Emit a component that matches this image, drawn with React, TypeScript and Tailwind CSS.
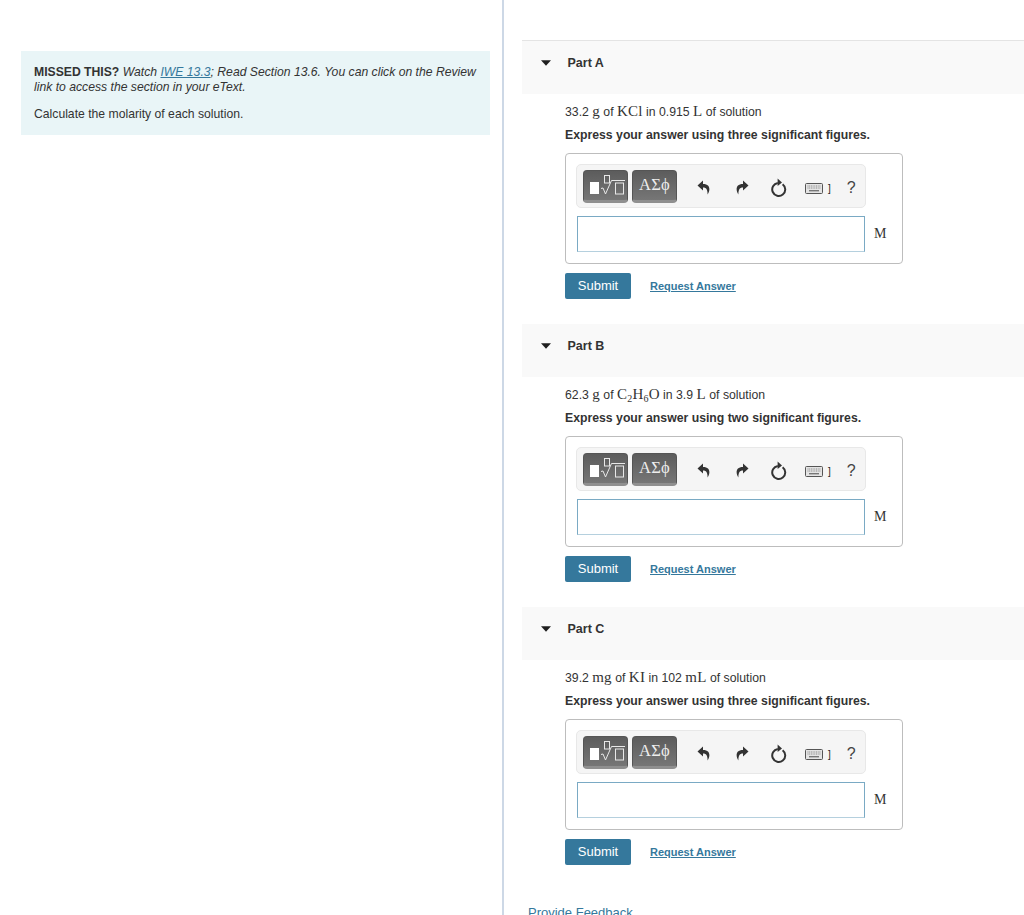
import React from 'react';

const sans = 'font-["Liberation_Sans",Arial,sans-serif]';
const serif = 'font-["Liberation_Serif","Times_New_Roman",serif]';

const M: React.FC<{ children: React.ReactNode }> = ({ children }) => (
    <span className={`${serif} text-[15px] tracking-[0.2px]`}>{children}</span>
);

const Caret = () => (
    <svg width="10" height="6" viewBox="0 0 10 6" className="block">
        <path d="M0 0.3 H10 L5 5.7 Z" fill="#1f1f1f" />
    </svg>
);

const TemplateIcon = () => (
    <svg width="36" height="20" viewBox="0 0 36 20" className="block ml-[4px]">
        <rect x="0" y="7" width="9" height="12" fill="#fff" />
        <rect x="14.5" y="0.5" width="5" height="7.5" fill="none" stroke="#e8e8e8" strokeWidth="1" />
        <path d="M11 13.5 L13 13 L15.5 19 L21.5 5.5 H35" fill="none" stroke="#e8e8e8" strokeWidth="1" />
        <rect x="25.5" y="8" width="8" height="11" fill="none" stroke="#e8e8e8" strokeWidth="1" />
    </svg>
);

const UndoIcon = ({ flip }: { flip?: boolean }) => (
    <svg width="14" height="15" viewBox="0 0 14 15" className={flip ? 'block -scale-x-100' : 'block'}>
        <path d="M6 0.5 L0.5 5.5 L6 10.5 V7.6 C9 7.5 10.6 9.4 10.6 14.5 C13 11 14.2 3.9 6 3.9 Z" fill="#333" />
    </svg>
);

const ResetIcon = () => (
    <svg width="16" height="20" viewBox="0 0 16 20" className="block">
        <path d="M11.6 6.2 A6.5 6.5 0 1 1 6.8 5" fill="none" stroke="#333" strokeWidth="2" />
        <path d="M6.6 0.5 L11 4.6 L6.6 8 Z" fill="#333" />
    </svg>
);

const KeyboardIcon = () => (
    <svg width="18" height="11" viewBox="0 0 18 11" className="block">
        <rect x="0.5" y="0.5" width="17" height="10" rx="1" fill="#e4e4e4" stroke="#555" />
        <path d="M2.5 3 H15.5 M2.5 5 H15.5" stroke="#888" strokeWidth="1" strokeDasharray="1 0.7" />
        <path d="M4 7.7 H14" stroke="#777" strokeWidth="1.4" />
    </svg>
);

const ToolButton: React.FC<{ children: React.ReactNode }> = ({ children }) => (
    <div className="h-[33px] w-[45px] rounded-[4px] border border-[#555] bg-[linear-gradient(#5c5c5c,#767676)] border-b-[3px] border-b-[#8f8f8f] flex items-center justify-center overflow-hidden">
        {children}
    </div>
);

const AnswerBox = () => (
    <div className="w-[338px] h-[111px] border border-[#bdbdbd] rounded-[4px] pl-[10px] pt-[10px]">
        <div className="h-[44px] w-[290px] bg-[#f5f5f5] border border-[#e8e8e8] rounded-[5px] flex items-center pl-[6px]">
            <ToolButton><TemplateIcon /></ToolButton>
            <div className="ml-[4px]">
                <ToolButton>
                    <span className={`${serif} text-[16.5px] leading-none text-[#eee] tracking-[0.3px]`}>ΑΣϕ</span>
                </ToolButton>
            </div>
            <div className="ml-[20px] mt-[3px]"><UndoIcon /></div>
            <div className="ml-[24px] mt-[3px]"><UndoIcon flip /></div>
            <div className="ml-[22px] mt-[3px]"><ResetIcon /></div>
            <div className="ml-[18px] mt-[5px] flex items-center gap-[5px]">
                <KeyboardIcon />
                <span className="text-[10px] leading-none text-[#222]">]</span>
            </div>
            <span className="ml-[16px] mt-[3px] text-[16px] text-[#444]">?</span>
        </div>
        <div className="mt-[8px] flex items-center">
            <div className="ml-px h-[36px] w-[288px] shrink-0 border border-[#7aaac4] border-b-[#b5d0de] bg-white" />
            <span className={`${serif} ml-[9px] -mt-[2px] text-[14px] text-[#333]`}>M</span>
        </div>
    </div>
);

const Part: React.FC<{ name: string; question: React.ReactNode; figures: string }> = ({ name, question, figures }) => (
    <section>
        <div className="h-[53px] bg-[#f9f9f9] flex items-start pt-[14px]">
            <div className="ml-[19px] mt-[5px]"><Caret /></div>
            <span className="ml-[16.5px] mt-px text-[12.5px] font-bold text-[#333] leading-[15px]">{name}</span>
        </div>
        <div className="pl-[43px]">
            <p className="mt-[8px] text-[12.25px] leading-[18px] text-[#333]">{question}</p>
            <p className="mt-[5px] text-[12.25px] font-bold leading-[18px] text-[#333]">
                Express your answer using {figures} significant figures.
            </p>
            <div className="mt-[9px]"><AnswerBox /></div>
            <div className="mt-[9px] flex items-center">
                <button className="h-[26px] w-[66px] bg-[#35789c] rounded-[2px] text-white text-[13px]">Submit</button>
                <a className="ml-[19px] text-[11px] font-bold text-[#35789c] underline">Request Answer</a>
            </div>
        </div>
    </section>
);

export default function App() {
    return (
        <div className={`${sans} h-[915px] w-[1024px] overflow-hidden flex bg-white`}>
            <div className="w-[502px] shrink-0 pl-[21px] pr-[12px] pt-[51px]">
                <div className="h-[84px] bg-[#e9f5f7] pl-[13px] pr-[4px] pt-[14px] text-[12.2px] text-[#333]">
                    <p className="leading-[15px] italic">
                        <b className="not-italic font-bold">MISSED THIS?</b> Watch <a className="text-[#35789c] underline">IWE 13.3</a>; Read Section 13.6. You can click on the Review link to access the section in your eText.
                    </p>
                    <p className="mt-[12px] leading-[15px]">Calculate the molarity of each solution.</p>
                </div>
            </div>
            <div className="w-[2px] shrink-0 bg-[#cdd8e6]" />
            <div className="flex-1 pl-[18px] pt-[40px]">
                <div className="border-t border-[#e4e4e4]">
                    <Part
                        name="Part A"
                        figures="three"
                        question={<>33.2 <M>g</M> of <M>KCl</M> in 0.915 <M>L</M> of solution</>}
                    />
                </div>
                <div className="mt-[25px]">
                    <Part
                        name="Part B"
                        figures="two"
                        question={<>62.3 <M>g</M> of <M>C<sub className="text-[10px]">2</sub>H<sub className="text-[10px]">6</sub>O</M> in 3.9 <M>L</M> of solution</>}
                    />
                </div>
                <div className="mt-[25px]">
                    <Part
                        name="Part C"
                        figures="three"
                        question={<>39.2 <M>mg</M> of <M>KI</M> in 102 <M>mL</M> of solution</>}
                    />
                </div>
                <a className="block mt-[40px] ml-[6px] text-[13px] leading-[16px] text-[#35789c]">Provide Feedback</a>
            </div>
        </div>
    );
}
